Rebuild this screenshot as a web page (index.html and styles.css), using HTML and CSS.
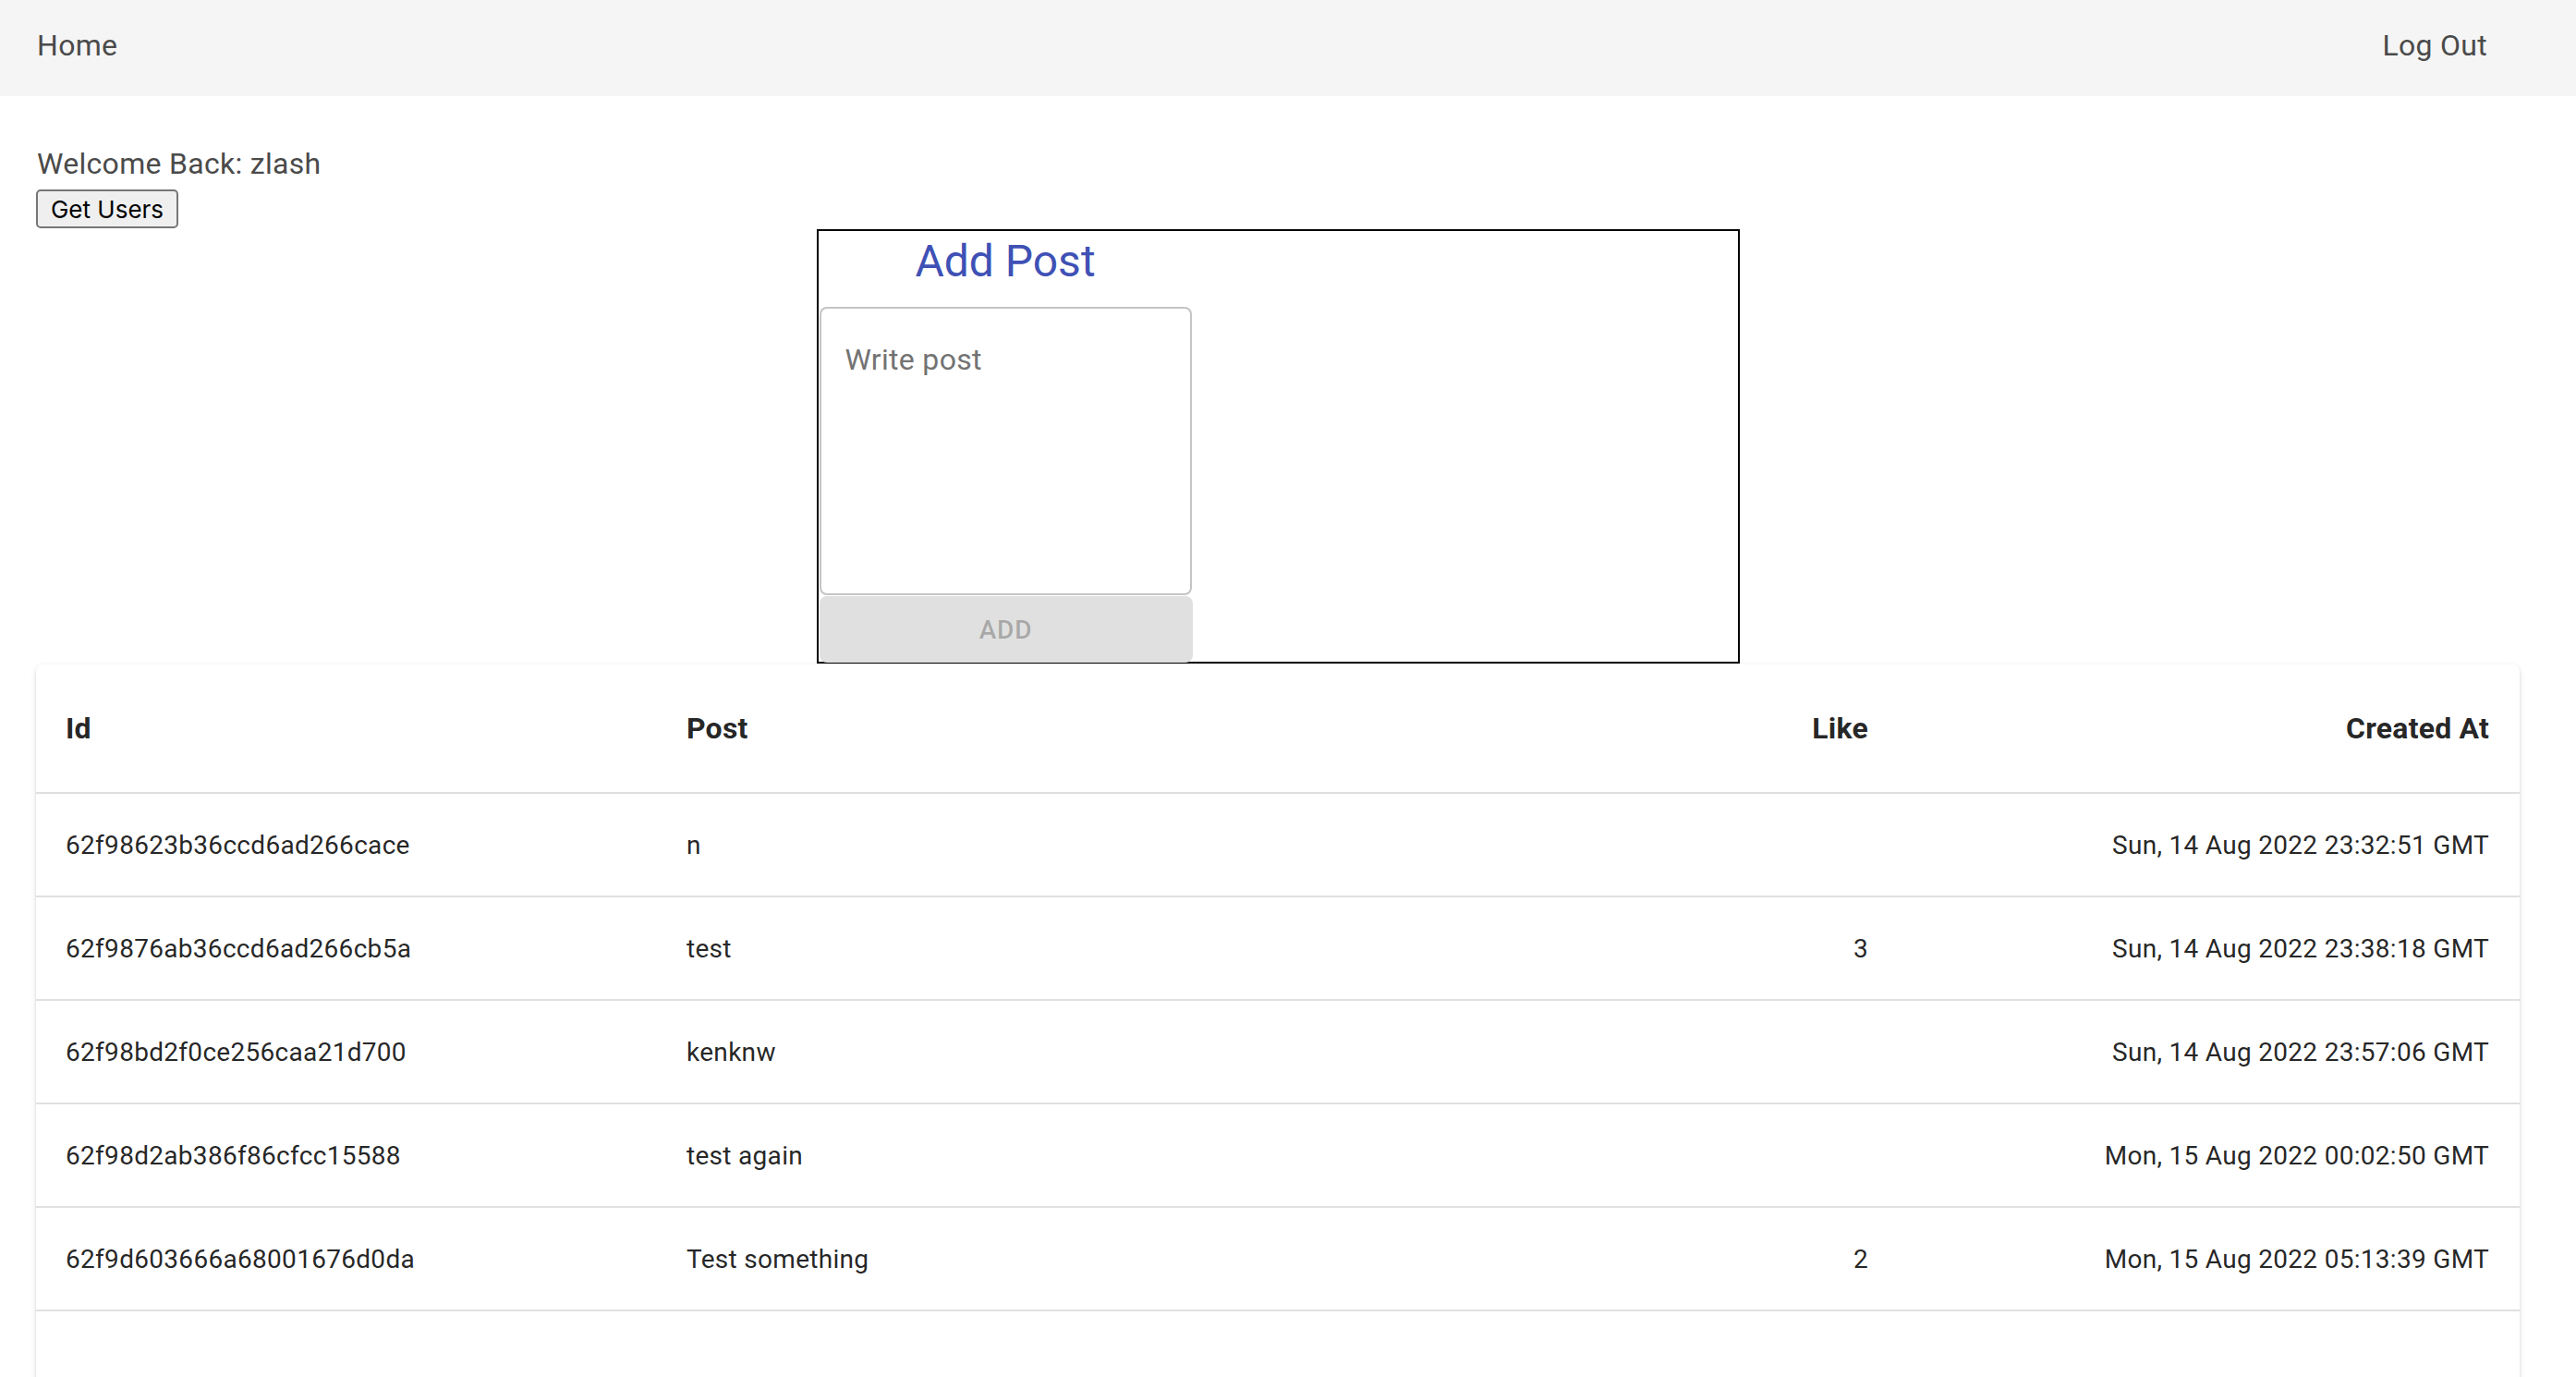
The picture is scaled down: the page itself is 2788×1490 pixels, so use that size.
FILE: index.html
```html
<!DOCTYPE html>
<html>
<head>
<meta charset="utf-8">
<title>Home</title>
<link rel="stylesheet" href="styles.css">
</head>
<body>
<nav class="nav">
  <a class="nav-link">Home</a>
  <a class="nav-link">Log Out</a>
</nav>
<main class="main">
  <div class="welcome">Welcome Back: zlash</div>
  <button class="get-users">Get Users</button>
  <section class="post-box">
    <div class="post-form">
      <h2 class="post-title">Add Post</h2>
      <textarea class="post-input" placeholder="Write post"></textarea>
      <button class="add-btn">ADD</button>
    </div>
  </section>
  <div class="paper">
    <table class="posts">
      <colgroup>
        <col class="c-id"><col class="c-post"><col class="c-like"><col class="c-date">
      </colgroup>
      <thead>
        <tr><th>Id</th><th>Post</th><th class="r">Like</th><th class="r">Created At</th></tr>
      </thead>
      <tbody>
        <tr><td>62f98623b36ccd6ad266cace</td><td>n</td><td class="r"></td><td class="r">Sun, 14 Aug 2022 23:32:51 GMT</td></tr>
        <tr><td>62f9876ab36ccd6ad266cb5a</td><td>test</td><td class="r">3</td><td class="r">Sun, 14 Aug 2022 23:38:18 GMT</td></tr>
        <tr><td>62f98bd2f0ce256caa21d700</td><td>kenknw</td><td class="r"></td><td class="r">Sun, 14 Aug 2022 23:57:06 GMT</td></tr>
        <tr><td>62f98d2ab386f86cfcc15588</td><td>test again</td><td class="r"></td><td class="r">Mon, 15 Aug 2022 00:02:50 GMT</td></tr>
        <tr><td>62f9d603666a68001676d0da</td><td>Test something</td><td class="r">2</td><td class="r">Mon, 15 Aug 2022 05:13:39 GMT</td></tr>
        <tr class="spacer"><td></td><td></td><td></td><td></td></tr>
      </tbody>
    </table>
  </div>
</main>
</body>
</html>
```

FILE: styles.css
```css
html, body {
  margin: 0;
  padding: 0;
  overflow: hidden;
  background: #ffffff;
  font-family: Roboto, "Noto Sans", sans-serif;
}

.nav {
  height: 104px;
  background: #f5f5f5;
  display: flex;
  align-items: center;
  justify-content: space-between;
  padding: 0 96px 6px 40px;
  box-sizing: border-box;
}

.nav-link {
  font-size: 32px;
  color: #4a4a4a;
  line-height: 38px;
  letter-spacing: 0.3px;
  cursor: pointer;
}

.main {
  padding: 54px 61px 0 39px;
}

.welcome {
  font-size: 32px;
  line-height: 38px;
  color: #4a4a4a;
  letter-spacing: 0.3px;
  padding-left: 1px;
}

.get-users {
  display: block;
  margin-top: 9px;
  width: 154px;
  height: 42px;
  padding: 0;
  font-family: Inter, "Liberation Sans", sans-serif;
  font-size: 26px;
  color: #000;
  background: #efefef;
  border: 2px solid #767676;
  border-radius: 5px;
}

.post-box {
  width: 999px;
  height: 470px;
  box-sizing: border-box;
  margin: 1px auto 0;
  border: 2px solid #000;
  padding-left: 1px;
}

.post-form {
  width: 403px;
  display: flex;
  flex-direction: column;
}

.post-title {
  margin: 5px 0 21px;
  font-size: 48px;
  line-height: 56px;
  font-weight: 400;
  color: #3f51b5;
  text-align: center;
}

.post-input {
  display: block;
  width: 403px;
  height: 312px;
  box-sizing: border-box;
  border: 2px solid rgba(0, 0, 0, 0.23);
  border-radius: 8px;
  padding: 32px 26px 28px;
  font-family: Roboto, sans-serif;
  font-size: 32px;
  line-height: 46px;
  letter-spacing: 0.3px;
  resize: none;
  outline: none;
  margin: 0;
}

.post-input::placeholder {
  color: #737373;
  opacity: 1;
}

.add-btn {
  margin-top: 1px;
  width: 404px;
  height: 72px;
  border: none;
  border-radius: 8px;
  background: #e0e0e0;
  color: rgba(0, 0, 0, 0.26);
  font-family: Roboto, sans-serif;
  font-size: 28px;
  font-weight: 500;
  letter-spacing: 0.8px;
  padding: 0;
}

.paper {
  margin-top: 1px;
  background: #fff;
  border-radius: 8px;
  box-shadow: 0 4px 2px -2px rgba(0, 0, 0, 0.2), 0 2px 2px 0 rgba(0, 0, 0, 0.14), 0 2px 6px 0 rgba(0, 0, 0, 0.12);
  overflow: hidden;
}

.posts {
  width: 100%;
  border-collapse: collapse;
  table-layout: fixed;
}

.c-id { width: 25%; }
.c-post { width: 35%; }
.c-like { width: 15%; }
.c-date { width: 25%; }

.posts th {
  height: 138px;
  padding: 0 32px;
  font-size: 32px;
  font-weight: 700;
  letter-spacing: 0.2px;
  color: rgba(0, 0, 0, 0.87);
  text-align: left;
  border-bottom: 2px solid #e0e0e0;
}

.posts td {
  height: 110px;
  padding: 0 32px;
  font-size: 28px;
  letter-spacing: 0.3px;
  color: rgba(0, 0, 0, 0.87);
  border-bottom: 2px solid #e0e0e0;
  white-space: nowrap;
}

.posts .r {
  text-align: right;
  padding-right: 33px;
}

.posts .spacer td {
  border-bottom: none;
}
```
